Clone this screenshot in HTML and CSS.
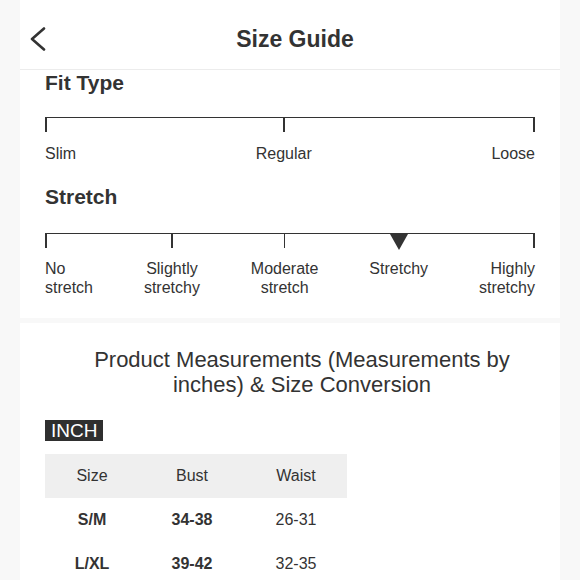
FILE: index.html
```html
<!DOCTYPE html>
<html lang="en">
<head>
<meta charset="utf-8">
<title>Size Guide</title>
<link rel="stylesheet" href="styles.css">
</head>
<body>
<div class="page">
  <header class="header">
    <button class="back" aria-label="Back">
      <svg width="16" height="24" viewBox="0 0 16 24"><polyline points="14,1.5 2,12 14,22.5" fill="none" stroke="#333" stroke-width="2.6" stroke-linecap="round" stroke-linejoin="round"/></svg>
    </button>
    <h1 class="title">Size Guide</h1>
    <span></span>
  </header>

  <section class="card fit-card">
    <h2 class="section-title">Fit Type</h2>
    <div class="scale">
      <div class="scale-item start"><span class="label">Slim</span></div>
      <div class="scale-item"><span class="label">Regular</span></div>
      <div class="scale-item end"><span class="label">Loose</span></div>
    </div>

    <h2 class="section-title stretch-title">Stretch</h2>
    <div class="scale stretch-scale">
      <div class="scale-item start"><span class="label wrap">No stretch</span></div>
      <div class="scale-item"><span class="label wrap">Slightly stretchy</span></div>
      <div class="scale-item"><span class="label wrap">Moderate stretch</span></div>
      <div class="scale-item marker"><span class="label wrap">Stretchy</span></div>
      <div class="scale-item end"><span class="label wrap">Highly stretchy</span></div>
    </div>
  </section>

  <section class="card measure-card">
    <h2 class="measure-title">Product Measurements (Measurements by inches) &amp; Size Conversion</h2>
    <span class="unit">INCH</span>
    <table class="sizes">
      <thead>
        <tr><th class="c1">Size</th><th class="c2">Bust</th><th class="c3">Waist</th></tr>
      </thead>
      <tbody>
        <tr><td class="b">S/M</td><td class="b">34-38</td><td>26-31</td></tr>
        <tr><td class="b">L/XL</td><td class="b">39-42</td><td>32-35</td></tr>
      </tbody>
    </table>
  </section>
</div>
</body>
</html>
```

FILE: styles.css
```css
* { box-sizing: border-box; }

html, body {
  margin: 0;
  background: #f8f8f8;
  font-family: "Liberation Sans", Arial, sans-serif;
  color: #333;
}

.page {
  width: 540px;
  height: 580px;
  overflow: hidden;
  margin: 0 20px;
  display: flex;
  flex-direction: column;
  gap: 5px;
}

.header {
  background: #fff;
  height: 70px;
  flex: none;
  border-bottom: 1px solid #ececec;
  display: grid;
  grid-template-columns: 1fr auto 1fr;
  align-items: center;
  padding: 9px 0 0 10px;
  margin-bottom: -5px;
}

.back {
  border: 0;
  background: none;
  padding: 0;
  width: 16px;
  height: 24px;
  display: flex;
}

.title {
  margin: 0;
  font-size: 23px;
  line-height: 26px;
  font-weight: bold;
  color: #333;
}

.card {
  background: #fff;
  padding: 0 25px;
  flex: none;
}

.fit-card {
  padding-top: 1px;
  padding-bottom: 21px;
}

.section-title {
  margin: 0;
  font-size: 21px;
  line-height: 24px;
  font-weight: bold;
}

.stretch-title {
  margin-top: 22px;
}

.scale {
  margin-top: 22px;
  display: flex;
  justify-content: space-between;
  border-top: 1.5px solid #333;
}

.stretch-title + .scale {
  margin-top: 24px;
}

.scale-item {
  display: flex;
  flex-direction: column;
  align-items: center;
  text-align: center;
}

.scale-item::before {
  content: "";
  width: 1.5px;
  height: 14px;
  background: #333;
}

.scale-item.start { align-items: flex-start; text-align: left; }
.scale-item.end { align-items: flex-end; text-align: right; }

.scale-item.marker::before {
  width: 0;
  height: 0;
  background: none;
  border-left: 9px solid transparent;
  border-right: 9px solid transparent;
  border-top: 16px solid #333;
  margin-bottom: -2px;
}

.label {
  margin-top: 12px;
  font-size: 16px;
  line-height: 19px;
}

.stretch-scale .label {
  margin-top: 11px;
}

.label.wrap {
  width: min-content;
}

.measure-card {
  padding-top: 24px;
  flex: 1;
  overflow: hidden;
}

.measure-title {
  margin: 0;
  padding-left: 24px;
  font-size: 22px;
  line-height: 25px;
  font-weight: normal;
  text-align: center;
}

.unit {
  display: inline-block;
  margin-top: 23px;
  background: #2f2f2f;
  color: #fff;
  font-size: 19px;
  line-height: 21px;
  padding: 0 6px;
}

.sizes {
  margin-top: 13px;
  border-collapse: collapse;
  width: 302px;
  font-size: 16px;
}

.sizes th, .sizes td {
  height: 44px;
  text-align: center;
  padding: 0;
}

.sizes .c1 { width: 94px; }
.sizes .c2 { width: 106px; }
.sizes .c3 { width: 102px; }

.sizes th {
  background: #efefef;
  font-weight: normal;
}

.sizes td.b { font-weight: bold; }
```
